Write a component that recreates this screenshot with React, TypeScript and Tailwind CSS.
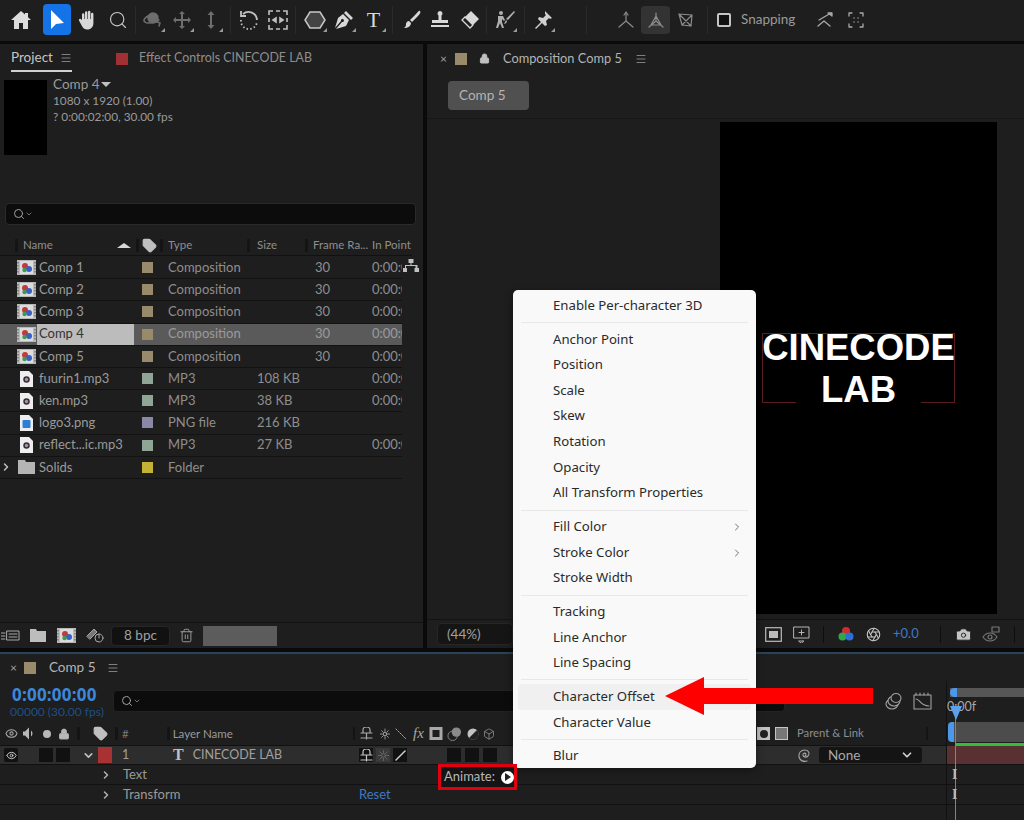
import { ChevronDown, ChevronRight, Search, Menu as MenuIcon, Eye, Lock, Trash2, Camera, Tag, Box, Aperture } from 'lucide-react';

const stroke = { fill: 'none', stroke: 'currentColor', strokeWidth: 1.5, strokeLinecap: 'round', strokeLinejoin: 'round' } as const;

function Corner() {
  return <span className="absolute right-0 bottom-0 w-0 h-0 border-l-[4px] border-l-transparent border-b-[4px] border-b-[#9a9a9a]" />;
}

function Tool({ w, corner, children }: { w: number; corner?: boolean; children: React.ReactNode }) {
  return (
    <div style={{ width: w }} className="h-[28px] shrink-0 flex items-center justify-center">
      <div className="relative w-[24px] h-[24px] flex items-center justify-center">
        {children}
        {corner && <Corner />}
      </div>
    </div>
  );
}

function Sep() {
  return <div className="mx-px w-px h-[28px] bg-[#2a2a2a] shrink-0" />;
}

function Toolbar() {
  return (
    <div className="h-[41px] bg-[#1e1e1e] flex items-center pl-[6px] pb-[2px] text-[#b8b8b8] shrink-0">
      <Tool w={30}>
        <svg width="22" height="20" viewBox="0 0 22 20" fill="#dcdcdc"><path d="M11 1 1 10h3v9h5v-6h4v6h5v-9h3l-3-2.7V3h-3v1.6z" /></svg>
      </Tool>
      <div className="ml-[7px] w-[28px] h-[31px] rounded bg-[#1473e6] flex items-center justify-center shrink-0">
        <svg width="18" height="24" viewBox="0 0 18 24" fill="#fff"><path d="M3 2v19l5-5 8-1z" /></svg>
      </div>
      <div className="ml-[2px]">
        <Tool w={30}>
          <svg width="22" height="22" viewBox="0 0 22 22" fill="#d8d8d8"><path d="M5 11V5.500a1.200 1.200 0 0 1 2.400 0V10h.6V3.500a1.200 1.200 0 0 1 2.400 0V10h.6V3a1.200 1.200 0 0 1 2.400 0v7h.6V5a1.200 1.200 0 0 1 2.400 0v9c0 4-2.500 6.500-6 6.500-3 0-4.500-1.500-6-4.500L2 11.500c-.6-1.300 1-2.200 2-1.200z" /></svg>
        </Tool>
      </div>
      <Tool w={30}>
        <Search size={20} strokeWidth={1.400} className="text-[#c8c8c8]" />
      </Tool>
      <div className="ml-[1px]"><Sep /></div>
      <div className="ml-px flex text-[#6e6e6e]">
        <Tool w={29} corner>
          <svg width="22" height="20" viewBox="0 0 22 20" {...stroke}><circle cx="11" cy="8" r="5" fill="#6e6e6e" /><path d="M6 6C2 8 1 11 3 12c2 2 9 1 14-2M15 12l3 1-1 3" /></svg>
        </Tool>
        <Tool w={29} corner>
          <svg width="20" height="20" viewBox="0 0 20 20" fill="currentColor"><path d="M10 1l3 3h-2v5h5V7l3 3-3 3v-2h-5v5h2l-3 3-3-3h2v-5H4v2l-3-3 3-3v2h5V4H7z" /></svg>
        </Tool>
        <Tool w={29} corner>
          <svg width="12" height="20" viewBox="0 0 12 20" fill="currentColor"><path d="M6 1l3.500 4H7v10h2.500L6 19l-3.500-4H5V5H2.500z" /></svg>
        </Tool>
      </div>
      <div className="ml-[4px]"><Sep /></div>
      <div className="ml-[3px] flex">
        <Tool w={28}>
          <svg width="22" height="22" viewBox="0 0 22 22" fill="none" stroke="#c0c0c0" strokeWidth="1.800"><path d="M5 5a8.500 8.500 0 0 1 14 6" /><path d="M3 11a8 8 0 0 0 16 2" strokeDasharray="1.500 2.200" /><path d="M3 2v5h5" /></svg>
        </Tool>
        <Tool w={29}>
          <svg width="20" height="20" viewBox="0 0 20 20" fill="none" stroke="#c0c0c0" strokeWidth="1.600"><path d="M1 5V1h4M15 1h4v4M1 15v4h4M15 19h4v-4M8 1h4M8 19h4M1 8v4M19 8v4" /><path d="M5 10l3-2v4zM15 10l-3-2v4z" fill="#c0c0c0" /></svg>
        </Tool>
      </div>
      <div className="ml-[2px]"><Sep /></div>
      <div className="ml-[4px] flex">
        <Tool w={28} corner>
          <svg width="22" height="20" viewBox="0 0 22 20"><path d="M6 2h10l5 8-5 8H6l-5-8z" fill="#444" stroke="#c8c8c8" strokeWidth="1.500" /></svg>
        </Tool>
        <Tool w={30} corner>
          <svg width="20" height="20" viewBox="0 0 20 20" fill="#d8d8d8"><path d="M12 1l7 7-2 2-7-7zM9 4l6 6-3 6-10 3 6-7a1.500 1.500 0 1 0-1-1l-6 7 3-10z" /></svg>
        </Tool>
        <Tool w={29} corner>
          <span className="text-[#d8d8d8] text-[22px] leading-none font-['Liberation_Serif',serif]">T</span>
        </Tool>
      </div>
      <div className="ml-[3px]"><Sep /></div>
      <div className="ml-[3px] flex">
        <Tool w={29}>
          <svg width="20" height="20" viewBox="0 0 20 20" fill="#d8d8d8"><path d="M18 1c1 1 0 3-2 5l-6 6-2-2 6-6c2-2 3-4 4-3zM7 11l2 2c0 3-3 5-7 5 2-1 2-3 2-4s1-3 3-3z" /></svg>
        </Tool>
        <Tool w={28}>
          <svg width="20" height="20" viewBox="0 0 20 20" fill="#d8d8d8"><path d="M10 1a2.500 2.500 0 0 1 1.500 4.500V10H18v3H2v-3h6.500V5.500A2.500 2.500 0 0 1 10 1zM1 15h18v2H1z" /></svg>
        </Tool>
        <Tool w={29}>
          <svg width="22" height="20" viewBox="0 0 22 20"><path d="M13 1l8 8-6 6-8-8z" fill="#d8d8d8" /><path d="M7 7l8 8-3 3-8-8z" fill="#1e1e1e" stroke="#d8d8d8" strokeWidth="1.300" /></svg>
        </Tool>
      </div>
      <div className="ml-[2px]"><Sep /></div>
      <div className="ml-[2px]">
        <Tool w={30} corner>
          <svg width="22" height="20" viewBox="0 0 22 20" fill="#b0b0b0"><circle cx="7" cy="3" r="2" /><path d="M4 6h5l2 4-1 1-2-2v3l2 6H8l-2-5-2 5H2l2-7zM20 1l1 1-7 8-2-1zM12 10l1 1c0 2-2 3-3 3z" /></svg>
        </Tool>
      </div>
      <div className="ml-[3px]"><Sep /></div>
      <div className="ml-[2px]">
        <Tool w={30} corner>
          <svg width="20" height="20" viewBox="0 0 20 20" fill="#d0d0d0"><path d="M12 1l7 7-2 1-1-1-3 3 1 4-2 1-3-3-6 6-1-1 6-6-3-3 1-2 4 1 3-3-1-1z" /></svg>
        </Tool>
      </div>
      <div className="ml-[27px]"><Sep /></div>
      <div className="ml-[22px] flex text-[#8c8c8c]">
        <Tool w={31}>
          <svg width="20" height="20" viewBox="0 0 20 20" {...stroke} strokeWidth={1.200}><path d="M10 3v8l-7 6M10 11l7 6" /><path d="M8 5l2-3 2 3" /></svg>
        </Tool>
        <div className="w-[29px] h-[28px] rounded bg-[#333333] flex items-center justify-center">
          <svg width="20" height="20" viewBox="0 0 20 20" {...stroke} strokeWidth={1.200}><path d="M10 3v8l-7 6M10 11l7 6M5 15h10M10 6l-5 9M10 6l5 9" /></svg>
        </div>
        <Tool w={31}>
          <svg width="18" height="18" viewBox="0 0 18 18" {...stroke} strokeWidth={1.200}><path d="M2 3l13 1-1 11-9-1zM2 3l12 12M15 4 5 14" /></svg>
        </Tool>
      </div>
      <div className="ml-[5px]"><Sep /></div>
      <div className="ml-[8px] w-[14px] h-[14px] rounded-[2px] border-2 border-[#c4c4c4] bg-[#111] shrink-0" />
      <span className="ml-[10px] text-[13.500px] text-[#9a9a9a]">Snapping</span>
      <div className="ml-[14px] flex text-[#a8a8a8]">
        <Tool w={31}>
          <svg width="18" height="18" viewBox="0 0 18 18" {...stroke} strokeWidth={1.300}><path d="M3 9l12-7M2 15l6-5 6 5" /><path d="M12 2h4v3z" fill="currentColor" /></svg>
        </Tool>
        <Tool w={31}>
          <svg width="16" height="16" viewBox="0 0 16 16" {...stroke} strokeWidth={1.300}><path d="M1 4V1h3M12 1h3v3M1 12v3h3M12 15h3v-3M6 6h.1M10 6h.1M6 10h.1M10 10h.1" /></svg>
        </Tool>
      </div>
    </div>
  );
}

type Row = { name: string; kind: 'comp' | 'mp3' | 'png' | 'folder'; type: string; size?: string; fps?: string; inPoint?: boolean; selected?: boolean };

const rows: Row[] = [
  { name: 'Comp 1', kind: 'comp', type: 'Composition', fps: '30', inPoint: true },
  { name: 'Comp 2', kind: 'comp', type: 'Composition', fps: '30', inPoint: true },
  { name: 'Comp 3', kind: 'comp', type: 'Composition', fps: '30', inPoint: true },
  { name: 'Comp 4', kind: 'comp', type: 'Composition', fps: '30', inPoint: true, selected: true },
  { name: 'Comp 5', kind: 'comp', type: 'Composition', fps: '30', inPoint: true },
  { name: 'fuurin1.mp3', kind: 'mp3', type: 'MP3', size: '108 KB', inPoint: true },
  { name: 'ken.mp3', kind: 'mp3', type: 'MP3', size: '38 KB', inPoint: true },
  { name: 'logo3.png', kind: 'png', type: 'PNG file', size: '216 KB' },
  { name: 'reflect...ic.mp3', kind: 'mp3', type: 'MP3', size: '27 KB', inPoint: true },
  { name: 'Solids', kind: 'folder', type: 'Folder' },
];

const swatchClass = {
  comp: 'bg-[#9a8a6c]',
  mp3: 'bg-[#8fa596]',
  png: 'bg-[#8b87a8]',
  folder: 'bg-[#c4b236]',
};

function CompIcon() {
  return (
    <svg width="19" height="15" viewBox="0 0 19 15">
      <rect width="19" height="15" fill="#b8b8b8" />
      <rect x="3" y="1" width="13" height="13" fill="#dcdcdc" />
      <circle cx="8" cy="6" r="3" fill="#c23a3a" />
      <circle cx="12" cy="9" r="3" fill="#3a5fc2" />
      <circle cx="7.500" cy="10" r="2.200" fill="#3f9a50" />
      <path d="M1 2v11M18 2v11" stroke="#555" strokeDasharray="1.500 1.500" />
    </svg>
  );
}

function FileIcon({ kind }: { kind: Row['kind'] }) {
  if (kind === 'comp') return <CompIcon />;
  if (kind === 'folder') {
    return (
      <svg width="17" height="14" viewBox="0 0 17 14" fill="#b4b4b4"><path d="M0 0h7l1 2h9v12H0z" /></svg>
    );
  }
  return (
    <svg width="13" height="16" viewBox="0 0 13 16">
      <path d="M0 0h9l4 4v12H0z" fill="#eeeeee" />
      {kind === 'mp3' ? (
        <circle cx="6.500" cy="8.500" r="2.500" fill="#999" stroke="#3a2a3a" strokeWidth="1.500" />
      ) : (
        <rect x="2.500" y="5" width="8" height="8" rx="1" fill="#2b7fd4" />
      )}
    </svg>
  );
}

function ProjectPanel() {
  return (
    <div className="w-[423px] shrink-0 bg-[#1e1e1e] flex flex-col relative">
      <div className="h-[28px] flex items-center shrink-0 pt-[1px]">
        <div className="ml-[11px] w-[61px] h-[27px] flex items-center justify-between border-b-2 border-[#d0d0d0] text-[13.500px] text-[#c4c4c4]">
          Project <MenuIcon size={12} strokeWidth={1.500} className="text-[#a0a0a0]" />
        </div>
        <div className="ml-[44px] w-[12px] h-[12px] bg-[#a03033]" />
        <span className="ml-[11px] text-[12.400px] text-[#8e8e8e] whitespace-nowrap">Effect Controls CINECODE LAB</span>
      </div>
      <div className="flex h-[75px] mt-[8px] shrink-0">
        <div className="ml-[4px] w-[43px] bg-black" />
        <div className="ml-[6px] -mt-[4px] flex flex-col text-[#9a9a9a] text-[11.800px] leading-[15.500px]">
          <span className="text-[13.500px] leading-[17px] flex items-center">Comp 4<span className="w-0 h-0 ml-[1px] border-x-[5px] border-x-transparent border-t-[5px] border-t-[#c0c0c0]" /></span>
          <span>1080 x 1920 (1.00)</span>
          <span>? 0:00:02:00, 30.00 fps</span>
        </div>
      </div>
      <div className="mt-[48px] mx-[5px] h-[22px] rounded-[4px] bg-[#0c0c0c] border border-[#2a2a2a] flex items-center pl-[7px] text-[#a0a0a0] shrink-0 w-[411px]">
        <Search size={12} /><ChevronDown size={8} />
      </div>
      <div className="mt-[10px] h-[21px] flex items-center text-[11.500px] text-[#8e8e8e] shrink-0 w-[412px] border-b border-[#111] relative">
        <span className="ml-[15px] w-[3px] h-[13px] bg-[#141414]" />
        <span className="ml-[5px] w-[94px]">Name</span>
        <span className="w-0 h-0 border-x-[7px] border-x-transparent border-b-[5px] border-b-[#d8d8d8]" />
        <span className="ml-[5px] w-[3px] h-[13px] bg-[#141414]" />
        <Tag size={15} fill="#c0c0c0" className="ml-[3px] text-[#c0c0c0]" />
        <span className="ml-[3px] w-[3px] h-[13px] bg-[#141414]" />
        <span className="ml-[5px] w-[79px]">Type</span>
        <span className="w-[3px] h-[13px] bg-[#141414]" />
        <span className="ml-[7px] w-[48px]">Size</span>
        <span className="w-[3px] h-[13px] bg-[#141414]" />
        <span className="ml-[5px] w-[55px] whitespace-nowrap">Frame Ra...</span>
        <span className="ml-[4px] whitespace-nowrap">In Point</span>
      </div>
      <div className="w-[402px] mt-[1px] shrink-0">
        {rows.map((r) => (
          <div key={r.name} className={`h-[22.200px] flex items-center border-b border-[#121212] text-[13px] ${r.selected ? 'bg-[#5a5a5a] text-[#9a9a9a]' : 'text-[#8e8e8e]'}`}>
            <div className="w-[37px] h-full flex items-center shrink-0 relative">
              {r.kind === 'folder' && <ChevronRight size={12} strokeWidth={3} className="absolute left-0 text-[#c0c0c0]" />}
              <div className="ml-[17px] w-[19px] flex justify-center"><FileIcon kind={r.kind} /></div>
            </div>
            <div className={`w-[97px] h-full flex items-center shrink-0 pl-[2px] ${r.selected ? 'bg-[#bcbcbc] text-[#333]' : 'text-[#9a9a9a]'}`}>{r.name}</div>
            <div className="w-[34px] shrink-0 flex pl-[8px]"><span className={`w-[11px] h-[11px] ${swatchClass[r.kind]}`} /></div>
            <div className="w-[89px] shrink-0">{r.type}</div>
            <div className="w-[57px] shrink-0">{r.size}</div>
            <div className="w-[58px] shrink-0 pl-[1px]">{r.fps}</div>
            <div className="w-[30px] overflow-hidden whitespace-nowrap">{r.inPoint ? '0:00:00' : ''}</div>
          </div>
        ))}
      </div>
      <svg className="absolute left-[403px] top-[215px]" width="16" height="14" viewBox="0 0 16 14" fill="#c0c0c0"><path d="M5.500 0h5v4h-2v2h6v3h1.500v4h-4.500V9h1V7H3v2h1v4H0V9h2V6h5.500V4h-2z" /></svg>
      <div className="mt-auto h-[26px] flex items-center text-[#a8a8a8] shrink-0 border-t border-[#111]">
        <svg className="ml-[1px]" width="19" height="12" viewBox="0 0 19 12" {...stroke} strokeWidth={1}><rect x="6" y="1" width="12" height="9" /><path d="M0 3h4M0 6h4M0 9h4M8 4h8M8 7h8" /></svg>
        <svg className="ml-[10px]" width="16" height="13" viewBox="0 0 16 13" fill="#bdbdbd"><path d="M0 0h6l1 2h9v11H0z" /></svg>
        <div className="ml-[11px]"><CompIcon /></div>
        <svg className="ml-[9px]" width="20" height="16" viewBox="0 0 20 16" {...stroke} strokeWidth={1}><path d="M2 8l7-7 3 3-7 7z" fill="#777" /><circle cx="14" cy="10" r="4" /><path d="M14 6v4" /></svg>
        <div className="ml-[6px] w-[59px] h-[20px] rounded-[4px] bg-[#111] border border-[#262626] flex items-center justify-center text-[13.500px] text-[#a0a0a0]">8 bpc</div>
        <Trash2 size={15} strokeWidth={1.400} className="ml-[9px]" />
        <div className="ml-[9px] w-[74px] h-[20px] bg-[#5c5c5c]" />
      </div>
    </div>
  );
}

function CompPanel() {
  return (
    <div className="flex-1 bg-[#1e1e1e] flex flex-col">
      <div className="h-[28px] flex items-center text-[12.800px] text-[#b4b4b4] shrink-0 pt-[1px]">
        <span className="ml-[13px] text-[12px] text-[#a0a0a0]">×</span>
        <span className="ml-[8px] w-[12px] h-[12px] bg-[#9a8a6c]" />
        <Lock size={11} className="ml-[12px] text-[#c0c0c0]" fill="#c0c0c0" />
        <span className="ml-[13px] whitespace-nowrap">Composition Comp 5</span>
        <MenuIcon size={12} strokeWidth={1.500} className="ml-[13px] text-[#a0a0a0]" />
      </div>
      <div className="h-[47px] border-b border-[#161616] flex items-start pl-[21px] pt-[9px] shrink-0">
        <div className="w-[81px] h-[29px] rounded-[4px] bg-[#505050] text-[13.500px] text-[#b4b4b4] flex items-center pl-[11px]">Comp 5</div>
      </div>
      <div className="flex-1 border-b border-[#141414] flex justify-end pr-[27px] pt-[3px]">
        <div className="w-[277px] h-[492px] bg-black relative">
          <div className="absolute left-[42px] top-[211px] w-[193px] h-[70px] border border-[#5b1c22] font-['Liberation_Sans',sans-serif] font-bold text-white text-[36.500px] text-center">
            <div className="-mx-px h-[28px] leading-[28px] whitespace-nowrap">CINECODE</div>
            <div className="mx-[33px] mt-[14px] h-[27px] leading-[27px] bg-black">LAB</div>
          </div>
        </div>
      </div>
      <div className="h-[28px] flex items-center shrink-0 text-[#b4b4b4]">
        <div className="ml-[10px] w-[76px] h-[22px] rounded-[4px] bg-[#151515] border border-[#262626] flex items-center pl-[9px] text-[13.500px] text-[#a0a0a0]">(44%)</div>
        <svg className="ml-[252px]" width="17" height="15" viewBox="0 0 17 15"><rect x=".7" y=".7" width="15.600" height="13.600" fill="none" stroke="#bbb" strokeWidth="1.200" /><rect x="4" y="4" width="9" height="7" fill="#bbb" /></svg>
        <svg className="ml-[11px]" width="17" height="17" viewBox="0 0 17 17" {...stroke} strokeWidth={1}><path d="M1 1h15v11H1zM8.500 4v5M6 6.500h5M6 15h5l-2.500 2z" /></svg>
        <div className="ml-[13px] w-px h-[17px] bg-[#0e0e0e]" />
        <svg className="ml-[14px]" width="16" height="16" viewBox="0 0 16 16"><circle cx="8" cy="5" r="4" fill="#d22c2c" /><circle cx="4.500" cy="10.500" r="4" fill="#2fa84a" /><circle cx="11.500" cy="10.500" r="4" fill="#2f6ed6" /></svg>
        <Aperture size={15} strokeWidth={1.800} className="ml-[12px] text-[#c4c4c4]" />
        <span className="ml-[12px] text-[13px] text-[#3f79c4]">+0.0</span>
        <div className="ml-[21px] w-px h-[17px] bg-[#0e0e0e]" />
        <Camera size={17} fill="#c4c4c4" stroke="#1e1e1e" strokeWidth={1.300} className="ml-[14px]" />
        <svg className="ml-[10px]" width="19" height="17" viewBox="0 0 19 17" {...stroke} strokeWidth={1.200} color="#777"><path d="M1 11c2-3 4-4 7-4s5 1 7 4c-2 3-4 4-7 4s-5-1-7-4z" /><circle cx="8" cy="11" r="2" /><rect x="10" y="1" width="7" height="5" /></svg>
        <div className="ml-[13px] w-px h-[17px] bg-[#0e0e0e]" />
      </div>
    </div>
  );
}

function Timeline() {
  return (
    <div className="flex-1 bg-[#1e1e1e] border-t-2 border-[#2b4258] flex flex-col min-h-0">
      <div className="h-[27px] flex items-center text-[13.500px] text-[#b4b4b4] shrink-0">
        <span className="ml-[10px] text-[12px] text-[#a0a0a0]">×</span>
        <span className="ml-[7px] w-[12px] h-[12px] bg-[#9a8a6c]" />
        <span className="ml-[13px]">Comp 5</span>
        <MenuIcon size={12} strokeWidth={1.500} className="ml-[12px] text-[#a0a0a0]" />
      </div>
      <div className="flex-1 flex min-h-0">
        <div className="w-[946px] shrink-0 flex flex-col">
          <div className="h-[41px] flex shrink-0">
            <div className="pl-[12px] pt-[3px] w-[113px]">
              <div className="text-[17px] leading-[21px] font-bold tracking-[0.200px] text-[#3d87d9] font-['Open_Sans',sans-serif]">0:00:00:00</div>
              <div className="text-[12px] leading-[13px] text-[#1d4e86] -ml-[2px] whitespace-nowrap">00000 (30.00 fps)</div>
            </div>
            <div className="mt-[9px] w-[672px] h-[22px] rounded-[4px] bg-[#0c0c0c] border border-[#222] flex items-center pl-[7px] text-[#a0a0a0]">
              <Search size={12} /><ChevronDown size={8} />
            </div>
            <div className="ml-[99px] mt-[6px] flex items-center gap-[11px] h-[28px] text-[#a0a0a0]">
              <svg width="18" height="18" viewBox="0 0 18 18" {...stroke} strokeWidth={1.100}><ellipse cx="8" cy="12" rx="6" ry="5" /><ellipse cx="10" cy="9" rx="6" ry="5" fill="#1e1e1e" /><ellipse cx="12" cy="6" rx="5" ry="4.500" fill="#1e1e1e" /></svg>
              <svg width="19" height="18" viewBox="0 0 19 18" {...stroke} strokeWidth={1.100}><rect x="1" y="3" width="17" height="14" /><path d="M3 1v2M7 1v2M11 1v2M15 1v2M3 7c4 0 4 7 13 7" /></svg>
            </div>
          </div>
          <div className="h-[24px] flex items-center border-b border-[#111] text-[#a8a8a8] text-[11.500px] shrink-0 relative">
            <Eye size={13} className="ml-[5px]" />
            <svg className="ml-[4px]" width="13" height="13" viewBox="0 0 13 12" fill="#b8b8b8"><path d="M1 4h2l4-4v12L3 8H1zM9 3c2 1.500 2 4.500 0 6z" /></svg>
            <span className="ml-[8px] w-[8px] h-[8px] rounded-full bg-[#b8b8b8]" />
            <Lock size={12} fill="#b8b8b8" className="ml-[7px]" />
            <span className="ml-[7px] w-[3px] h-[13px] bg-[#141414]" />
            <Tag size={15} fill="#c0c0c0" className="ml-[13px] text-[#c0c0c0]" />
            <span className="ml-[7px] w-[3px] h-[13px] bg-[#141414]" />
            <span className="ml-[4px] text-[#777]">#</span>
            <span className="ml-[38px] w-[3px] h-[13px] bg-[#141414]" />
            <span className="ml-[3px] text-[#9a9a9a]">Layer Name</span>
            <span className="absolute left-[353px] w-[2px] h-[13px] bg-[#141414]" />
            <div className="absolute left-[360px] flex items-center text-[#a8a8a8]">
              <svg width="13" height="13" viewBox="0 0 13 13" {...stroke} strokeWidth={1.200}><path d="M1 6h11M3 6V3a3.500 3 0 0 1 7 0v3M6.500 6v6M1 11h11" /></svg>
              <svg className="ml-[7px]" width="10" height="12" viewBox="0 0 12 12" {...stroke} strokeWidth={1}><circle cx="6" cy="6" r="2" /><path d="M6 0v3M6 9v3M0 6h3M9 6h3M2 2l2 2M8 8l2 2M2 10l2-2M8 4l2-2" /></svg>
              <svg className="ml-[5px]" width="12" height="12" viewBox="0 0 12 12" {...stroke} strokeDasharray="1.500 1.500" strokeWidth={1}><path d="M1 1l10 10" /></svg>
              <span className="ml-[6px] w-[12px] italic text-[15px] leading-none font-['Liberation_Serif',serif]">fx</span>
              <svg className="ml-[4px]" width="14" height="13" viewBox="0 0 13 13" fill="#a8a8a8"><path d="M0 0h13v13H0zM3 3v7h7V3z" /></svg>
              <svg className="ml-[4px]" width="15" height="15" viewBox="0 0 16 15"><circle cx="6" cy="10" r="5" fill="none" stroke="#888" /><circle cx="10" cy="6" r="5" fill="#8a8a8a" /></svg>
              <svg className="ml-[5px]" width="12" height="12" viewBox="0 0 12 12"><circle cx="6" cy="6" r="5.500" fill="#c4c4c4" /><path d="M10 2 2 10a5.500 5.500 0 0 0 8-8z" fill="#222" /></svg>
              <Box size={12} strokeWidth={1.300} className="ml-[4px]" />
            </div>
            <div className="absolute left-[757px] flex gap-[5px] items-center">
              <span className="w-[13px] h-[13px] bg-[#c4c4c4] flex items-center justify-center"><span className="w-[8px] h-[8px] bg-[#222] rounded-full" /></span>
              <span className="w-[13px] h-[13px] border border-[#c4c4c4] bg-[#777]" />
            </div>
            <span className="absolute left-[797px] text-[11.300px] text-[#8e8e8e] whitespace-nowrap">Parent & Link</span>
            <span className="absolute left-[926px] w-[2px] h-[13px] bg-[#141414]" />
          </div>
          <div className="h-[19px] flex items-center bg-[#2d2d2d] border-b border-[#111] text-[12.500px] text-[#a0a0a0] shrink-0 relative">
            <span className="ml-[4px] w-[14px] h-[14px] bg-[#111] rounded-[2px] flex items-center justify-center"><Eye size={11} className="text-[#d0d0d0]" /></span>
            <span className="ml-[21px] w-[14px] h-[14px] bg-[#111]" />
            <span className="ml-[3px] w-[14px] h-[14px] bg-[#111]" />
            <ChevronDown size={13} strokeWidth={3} className="ml-[12px] text-[#c0c0c0]" />
            <span className="ml-[3px] w-[14px] h-[16px] bg-[#a83232]" />
            <span className="ml-[10px] w-[7px]">1</span>
            <span className="ml-[44px] text-[16px] leading-none font-bold font-['Liberation_Serif',serif] text-[#c0c0c0]">T</span>
            <span className="ml-[9px]">CINECODE LAB</span>
            <div className="absolute left-[359px] flex gap-[3px]">
              <span className="w-[14px] h-[14px] bg-[#111] flex items-center justify-center text-[#c8c8c8]">
                <svg width="13" height="13" viewBox="0 0 13 13" {...stroke} strokeWidth={1.200}><path d="M1 6h11M3 6V3a3.500 3 0 0 1 7 0v3M6.500 6v6M1 11h11" /></svg>
              </span>
              <span className="w-[14px] h-[14px] bg-[#3a3a3a] flex items-center justify-center text-[#666]">
                <svg width="11" height="11" viewBox="0 0 12 12" {...stroke} strokeWidth={1}><circle cx="6" cy="6" r="2" /><path d="M6 0v3M6 9v3M0 6h3M9 6h3M2 2l2 2M8 8l2 2M2 10l2-2M8 4l2-2" /></svg>
              </span>
              <span className="w-[14px] h-[14px] bg-[#111] flex items-center justify-center text-[#d0d0d0]">
                <svg width="11" height="11" viewBox="0 0 11 11" {...stroke}><path d="M1 10 10 1" /></svg>
              </span>
            </div>
            <div className="absolute left-[447px] flex gap-[4px]">
              <span className="w-[14px] h-[14px] bg-[#111]" />
              <span className="w-[14px] h-[14px] bg-[#111]" />
              <span className="w-[14px] h-[14px] bg-[#111]" />
            </div>
            <svg className="absolute left-[797px]" width="15" height="15" viewBox="0 0 15 15" {...stroke} strokeWidth={1.100} color="#a8a8a8"><path d="M8 8a1.500 1.500 0 1 0-2-1c0 2 3 3 5 1s1-6-3-6-7 3-6 7 5 5 8 4" /></svg>
            <div className="absolute left-[819px] w-[103px] h-[16px] rounded-[3px] bg-[#141414] flex items-center pl-[9px] pr-[8px] justify-between text-[13.500px] text-[#a8a8a8]">
              None <ChevronDown size={14} strokeWidth={3} className="text-[#d0d0d0]" />
            </div>
          </div>
          <div className="h-[20px] flex items-center border-b border-[#111] text-[13px] text-[#9a9a9a] shrink-0">
            <ChevronRight size={12} strokeWidth={3} className="ml-[100px] text-[#b0b0b0]" />
            <span className="ml-[11px]">Text</span>
          </div>
          <div className="h-[20px] flex items-center border-b border-[#111] text-[13px] text-[#9a9a9a] shrink-0">
            <ChevronRight size={12} strokeWidth={3} className="ml-[100px] text-[#b0b0b0]" />
            <span className="ml-[11px] w-[236px]">Transform</span>
            <span className="text-[#3f79c4]">Reset</span>
          </div>
        </div>
        <div className="flex-1 border-l border-[#111] flex flex-col relative">
          <div className="h-[41px] shrink-0 pt-[7px] pl-[3px] text-[12.500px] text-[#a8a8a8]">
            <div className="h-[9px] bg-[#565656] relative"><span className="absolute left-0 top-0 w-[7px] h-[9px] rounded-l-full bg-[#4b97ea]" /></div>
            <div className="mt-[2px] -ml-[3px] leading-[16px]">0:00f</div>
          </div>
          <div className="h-[24px] shrink-0 pl-[1px] flex">
            <span className="w-[6px] h-[20px] rounded-l-[4px] bg-[#4b97ea]" />
            <span className="flex-1 h-[20px] bg-[#4c4c4c]" />
          </div>
          <div className="h-[19px] bg-[#5a3132] border-b border-[#111] shrink-0" />
          <div className="h-[20px] border-b border-[#111] shrink-0" />
          <div className="h-[20px] border-b border-[#111] shrink-0" />
          {/* playhead + keyframe beams sit on top of the tracks */}
          <div className="absolute left-[8px] top-[27px] bottom-0 w-px bg-[#4b8fdc]" />
          <div className="absolute left-[3px] top-[25px] w-0 h-0 border-x-[6px] border-x-transparent border-t-[14px] border-t-[#5aa3ec]" />
          <div className="absolute left-[9px] top-[62px] right-0 h-[3px] bg-[#2fbf3f]" />
          <span className="absolute left-[5px] top-[86px] text-[14px] leading-[16px] text-[#b8b8b8] font-['Liberation_Serif',serif] font-bold">I</span>
          <span className="absolute left-[5px] top-[106px] text-[14px] leading-[16px] text-[#b8b8b8] font-['Liberation_Serif',serif] font-bold">I</span>
        </div>
      </div>
    </div>
  );
}

type MenuItem = { label: string; sub?: boolean; active?: boolean };

const menuGroups: MenuItem[][] = [
  [{ label: 'Enable Per-character 3D' }],
  [
    { label: 'Anchor Point' },
    { label: 'Position' },
    { label: 'Scale' },
    { label: 'Skew' },
    { label: 'Rotation' },
    { label: 'Opacity' },
    { label: 'All Transform Properties' },
  ],
  [{ label: 'Fill Color', sub: true }, { label: 'Stroke Color', sub: true }, { label: 'Stroke Width' }],
  [{ label: 'Tracking' }, { label: 'Line Anchor' }, { label: 'Line Spacing' }],
  [{ label: 'Character Offset', active: true }, { label: 'Character Value' }],
  [{ label: 'Blur' }],
];

function AnimateMenu() {
  return (
    <div className="absolute left-[513px] top-[290px] w-[243px] h-[478px] rounded-[5px] bg-[#f9f9f9] shadow-[0_2px_8px_rgba(0,0,0,0.4)] pt-[3px] px-[5px] font-['Noto_Sans',sans-serif] text-[13.200px] text-[#2a2a2a]">
      {menuGroups.map((group, i) => (
        <div key={i}>
          {i > 0 && <div className="mx-[3px] my-[3.500px] border-t border-[#e8e8e8]" />}
          {group.map((item) => (
            <div key={item.label} className={`h-[25.650px] flex items-center justify-between pl-[35px] pr-[8px] rounded-[3px] ${item.active ? 'bg-[#f0f0f0]' : ''}`}>
              {item.label}
              {item.sub && <ChevronRight size={12} strokeWidth={1.500} className="text-[#444]" />}
            </div>
          ))}
        </div>
      ))}
    </div>
  );
}

export default function App() {
  return (
    <div className="relative w-[1024px] h-[820px] overflow-hidden bg-[#0a0a0a] flex flex-col font-['Lato',sans-serif]">
      <Toolbar />
      <div className="h-[604px] mt-[3px] flex gap-[4px] shrink-0">
        <ProjectPanel />
        <CompPanel />
      </div>
      <div className="mt-[4px] flex-1 flex flex-col min-h-0">
        <Timeline />
      </div>

      <AnimateMenu />

      {/* tutorial annotations */}
      <svg className="absolute left-[664px] top-[676px]" width="210" height="40" viewBox="0 0 210 40">
        <path d="M1 20 40 1v11h169v16H40v11z" fill="#ff0000" />
      </svg>
      <div className="absolute left-[438px] top-[764px] w-[79px] h-[26px] border-[3px] border-[#e00010] flex items-center pl-[3px] text-[13px] text-[#b8b8b8] bg-[#141414]">
        Animate:
        <span className="ml-[6px] w-[13px] h-[13px] rounded-full bg-white flex items-center justify-center">
          <span className="ml-[2px] w-0 h-0 border-y-[4px] border-y-transparent border-l-[6px] border-l-[#222]" />
        </span>
      </div>
    </div>
  );
}
